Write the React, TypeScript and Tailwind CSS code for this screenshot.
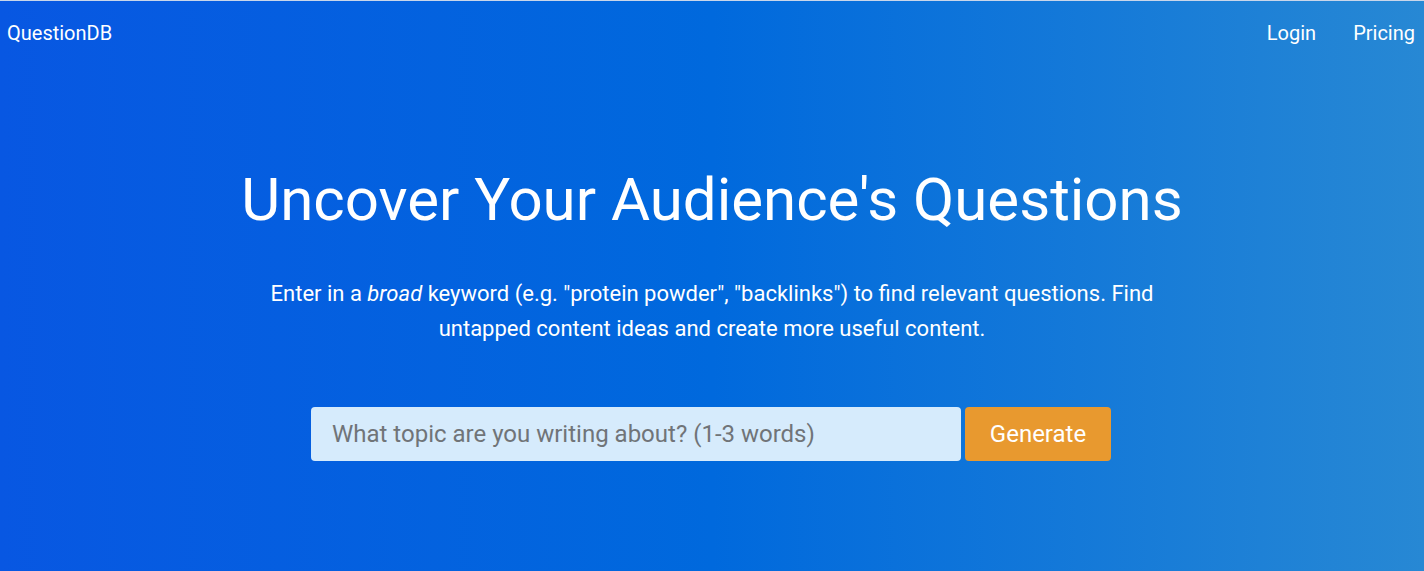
import React from "react";

export default function App() {
  return (
    <div
      className="w-full h-[571px] border-t border-[#c9d6ea] bg-[linear-gradient(to_right,#0857e2_0%,#0069dd_50%,#2788d4_100%)] text-white flex flex-col"
      style={{ fontFamily: "Roboto, 'Liberation Sans', sans-serif" }}
    >
      <nav className="flex items-center justify-between h-[64px] pl-[7px] pr-[9px]">
        <a className="text-[20px] leading-none">QuestionDB</a>
        <div className="flex items-center gap-[37px] text-[20px] leading-none">
          <a>Login</a>
          <a>Pricing</a>
        </div>
      </nav>
      <div className="flex flex-col items-center">
        <h1 className="mt-[99px] text-[60px] leading-[72px] font-normal">
          Uncover Your Audience's Questions
        </h1>
        <p className="mt-[40px] w-[900px] text-center text-[22px] leading-[35px]">
          Enter in a <em>broad</em> keyword (e.g. "protein powder", "backlinks") to find relevant questions. Find untapped content ideas and create more useful content.
        </p>
        <div className="mt-[61px] mr-[2px] flex gap-[4px]">
          <input
            className="w-[650px] h-[54px] rounded-[4px] bg-[#d6ebfc] px-[21px] text-[24px] text-[#495057] placeholder:text-[#707478] outline-none"
            placeholder="What topic are you writing about? (1-3 words)"
          />
          <button className="w-[146px] h-[54px] rounded-[4px] bg-[#e8992f] text-[24px] text-white">
            Generate
          </button>
        </div>
      </div>
    </div>
  );
}
